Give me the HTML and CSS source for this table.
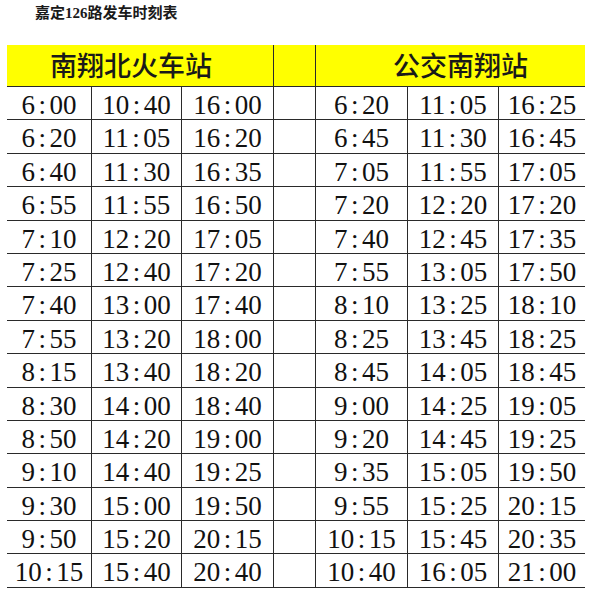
FILE: index.html
```html
<!DOCTYPE html>
<html lang="zh-CN">
<head>
<meta charset="utf-8">
<title>嘉定126路发车时刻表</title>
<link rel="stylesheet" href="styles.css">
</head>
<body>
<div class="page">
  <div class="title">嘉定126路发车时刻表</div>
  <div class="table">
    <div class="head head-left">南翔北火车站</div>
    <div class="head head-gap"></div>
    <div class="head head-right">公交南翔站</div>

    <div class="cell">6<span class="c">:</span>00</div><div class="cell">10<span class="c">:</span>40</div><div class="cell">16<span class="c">:</span>00</div><div class="cell gap"></div><div class="cell">6<span class="c">:</span>20</div><div class="cell">11<span class="c">:</span>05</div><div class="cell last">16<span class="c">:</span>25</div>
    <div class="cell">6<span class="c">:</span>20</div><div class="cell">11<span class="c">:</span>05</div><div class="cell">16<span class="c">:</span>20</div><div class="cell gap"></div><div class="cell">6<span class="c">:</span>45</div><div class="cell">11<span class="c">:</span>30</div><div class="cell last">16<span class="c">:</span>45</div>
    <div class="cell">6<span class="c">:</span>40</div><div class="cell">11<span class="c">:</span>30</div><div class="cell">16<span class="c">:</span>35</div><div class="cell gap"></div><div class="cell">7<span class="c">:</span>05</div><div class="cell">11<span class="c">:</span>55</div><div class="cell last">17<span class="c">:</span>05</div>
    <div class="cell">6<span class="c">:</span>55</div><div class="cell">11<span class="c">:</span>55</div><div class="cell">16<span class="c">:</span>50</div><div class="cell gap"></div><div class="cell">7<span class="c">:</span>20</div><div class="cell">12<span class="c">:</span>20</div><div class="cell last">17<span class="c">:</span>20</div>
    <div class="cell">7<span class="c">:</span>10</div><div class="cell">12<span class="c">:</span>20</div><div class="cell">17<span class="c">:</span>05</div><div class="cell gap"></div><div class="cell">7<span class="c">:</span>40</div><div class="cell">12<span class="c">:</span>45</div><div class="cell last">17<span class="c">:</span>35</div>
    <div class="cell">7<span class="c">:</span>25</div><div class="cell">12<span class="c">:</span>40</div><div class="cell">17<span class="c">:</span>20</div><div class="cell gap"></div><div class="cell">7<span class="c">:</span>55</div><div class="cell">13<span class="c">:</span>05</div><div class="cell last">17<span class="c">:</span>50</div>
    <div class="cell">7<span class="c">:</span>40</div><div class="cell">13<span class="c">:</span>00</div><div class="cell">17<span class="c">:</span>40</div><div class="cell gap"></div><div class="cell">8<span class="c">:</span>10</div><div class="cell">13<span class="c">:</span>25</div><div class="cell last">18<span class="c">:</span>10</div>
    <div class="cell">7<span class="c">:</span>55</div><div class="cell">13<span class="c">:</span>20</div><div class="cell">18<span class="c">:</span>00</div><div class="cell gap"></div><div class="cell">8<span class="c">:</span>25</div><div class="cell">13<span class="c">:</span>45</div><div class="cell last">18<span class="c">:</span>25</div>
    <div class="cell">8<span class="c">:</span>15</div><div class="cell">13<span class="c">:</span>40</div><div class="cell">18<span class="c">:</span>20</div><div class="cell gap"></div><div class="cell">8<span class="c">:</span>45</div><div class="cell">14<span class="c">:</span>05</div><div class="cell last">18<span class="c">:</span>45</div>
    <div class="cell">8<span class="c">:</span>30</div><div class="cell">14<span class="c">:</span>00</div><div class="cell">18<span class="c">:</span>40</div><div class="cell gap"></div><div class="cell">9<span class="c">:</span>00</div><div class="cell">14<span class="c">:</span>25</div><div class="cell last">19<span class="c">:</span>05</div>
    <div class="cell">8<span class="c">:</span>50</div><div class="cell">14<span class="c">:</span>20</div><div class="cell">19<span class="c">:</span>00</div><div class="cell gap"></div><div class="cell">9<span class="c">:</span>20</div><div class="cell">14<span class="c">:</span>45</div><div class="cell last">19<span class="c">:</span>25</div>
    <div class="cell">9<span class="c">:</span>10</div><div class="cell">14<span class="c">:</span>40</div><div class="cell">19<span class="c">:</span>25</div><div class="cell gap"></div><div class="cell">9<span class="c">:</span>35</div><div class="cell">15<span class="c">:</span>05</div><div class="cell last">19<span class="c">:</span>50</div>
    <div class="cell">9<span class="c">:</span>30</div><div class="cell">15<span class="c">:</span>00</div><div class="cell">19<span class="c">:</span>50</div><div class="cell gap"></div><div class="cell">9<span class="c">:</span>55</div><div class="cell">15<span class="c">:</span>25</div><div class="cell last">20<span class="c">:</span>15</div>
    <div class="cell">9<span class="c">:</span>50</div><div class="cell">15<span class="c">:</span>20</div><div class="cell">20<span class="c">:</span>15</div><div class="cell gap"></div><div class="cell">10<span class="c">:</span>15</div><div class="cell">15<span class="c">:</span>45</div><div class="cell last">20<span class="c">:</span>35</div>
    <div class="cell">10<span class="c">:</span>15</div><div class="cell">15<span class="c">:</span>40</div><div class="cell">20<span class="c">:</span>40</div><div class="cell gap"></div><div class="cell">10<span class="c">:</span>40</div><div class="cell">16<span class="c">:</span>05</div><div class="cell last">21<span class="c">:</span>00</div>
  </div>
</div>
</body>
</html>
```
FILE: styles.css
```css
html, body {
  margin: 0;
  padding: 0;
  background: #ffffff;
}

.page {
  width: 594px;
  height: 595px;
  overflow: hidden;
}

.title {
  height: 45px;
  box-sizing: border-box;
  padding: 3px 0 0 35px;
  font-family: "Liberation Serif", "Noto Sans CJK SC", serif;
  font-weight: 700;
  font-size: 15px;
  line-height: 20px;
  color: #1a1a1a;
}

.table {
  margin-left: 7px;
  display: grid;
  grid-template-columns: 85px 90px 92px 42px 92px 91px 86px;
  width: 578px;
}

.head {
  height: 42px;
  box-sizing: border-box;
  background: #ffff00;
  border-bottom: 1.5px solid #2a2a2a;
  font-family: "Noto Sans CJK SC", sans-serif;
  font-weight: 500;
  font-size: 27px;
  line-height: 40px;
  color: #1a1a1a;
  white-space: nowrap;
}

.head-left {
  grid-column: span 3;
  border-right: 1.5px solid #2a2a2a;
  padding-left: 43px;
}

.head-gap {
  border-right: 1.5px solid #2a2a2a;
}

.head-right {
  grid-column: span 3;
  padding-left: 77px;
}

.cell {
  height: 33.4px;
  box-sizing: border-box;
  border-bottom: 1.5px solid #2a2a2a;
  border-right: 1.5px solid #2a2a2a;
  font-family: "Liberation Serif", serif;
  font-size: 27px;
  line-height: 36px;
  text-align: center;
  color: #111111;
  white-space: nowrap;
}

.cell.last {
  border-right: none;
}

.c {
  margin: 0 3.5px;
}
```
